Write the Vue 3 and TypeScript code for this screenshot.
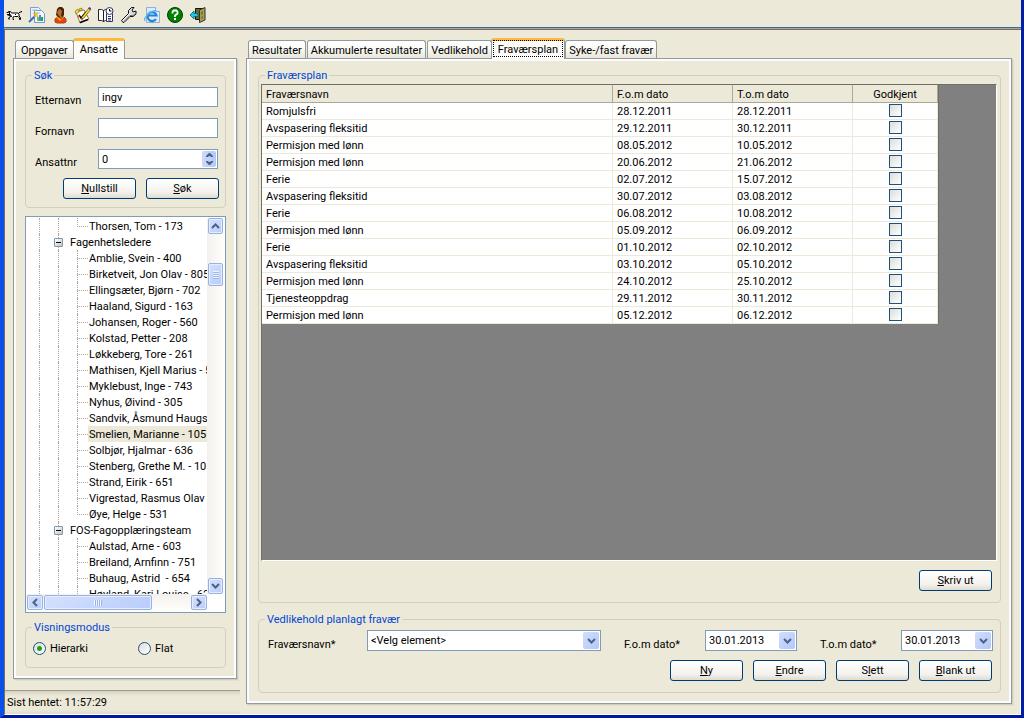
<script setup lang="ts">
import { ref } from 'vue'

interface Absence {
  name: string
  from: string
  to: string
  approved: boolean
}

interface TreeRow {
  label: string
  kind: 'group' | 'leaf'
  last?: boolean
}

interface Caption {
  before: string
  key: string
  after: string
}

const leftTabs = ['Oppgaver', 'Ansatte']
const activeLeft = ref('Ansatte')

const rightTabs = ['Resultater', 'Akkumulerte resultater', 'Vedlikehold', 'Fraværsplan', 'Syke-/fast fravær']
const activeRight = ref('Fraværsplan')

const tools = ['Søk', 'Rapport', 'Ansatt', 'Oppgaver', 'Tidsplan', 'Innstillinger', 'Nettleser', 'Hjelp', 'Avslutt']

const lastName = ref('ingv')
const firstName = ref('')
const employeeNo = ref('0')
const mode = ref('hierarki')
const fromDate = ref('30.01.2013')
const toDate = ref('30.01.2013')

const leaf = (label: string, last = false): TreeRow => ({ label, kind: 'leaf', last })
const group = (label: string): TreeRow => ({ label, kind: 'group' })

const tree: TreeRow[] = [
  leaf('Thorsen, Tom - 173', true),
  group('Fagenhetsledere'),
  leaf('Amblie, Svein - 400'),
  leaf('Birketveit, Jon Olav - 805'),
  leaf('Ellingsæter, Bjørn - 702'),
  leaf('Haaland, Sigurd - 163'),
  leaf('Johansen, Roger - 560'),
  leaf('Kolstad, Petter - 208'),
  leaf('Løkkeberg, Tore - 261'),
  leaf('Mathisen, Kjell Marius - 5'),
  leaf('Myklebust, Inge - 743'),
  leaf('Nyhus, Øivind - 305'),
  leaf('Sandvik, Åsmund Haugs'),
  leaf('Smelien, Marianne - 105'),
  leaf('Solbjør, Hjalmar - 636'),
  leaf('Stenberg, Grethe M. - 10'),
  leaf('Strand, Eirik - 651'),
  leaf('Vigrestad, Rasmus Olav -'),
  leaf('Øye, Helge - 531', true),
  group('FOS-Fagopplæringsteam'),
  leaf('Aulstad, Arne - 603'),
  leaf('Breiland, Arnfinn - 751'),
  leaf('Buhaug, Astrid  - 654'),
  leaf('Høyland, Kari Louise - 62'),
]
const selected = ref('Smelien, Marianne - 105')

const absence = (name: string, from: string, to: string): Absence => ({ name, from, to, approved: false })
const absences = ref<Absence[]>([
  absence('Romjulsfri', '28.12.2011', '28.12.2011'),
  absence('Avspasering fleksitid', '29.12.2011', '30.12.2011'),
  absence('Permisjon med lønn', '08.05.2012', '10.05.2012'),
  absence('Permisjon med lønn', '20.06.2012', '21.06.2012'),
  absence('Ferie', '02.07.2012', '15.07.2012'),
  absence('Avspasering fleksitid', '30.07.2012', '03.08.2012'),
  absence('Ferie', '06.08.2012', '10.08.2012'),
  absence('Permisjon med lønn', '05.09.2012', '06.09.2012'),
  absence('Ferie', '01.10.2012', '02.10.2012'),
  absence('Avspasering fleksitid', '03.10.2012', '05.10.2012'),
  absence('Permisjon med lønn', '24.10.2012', '25.10.2012'),
  absence('Tjenesteoppdrag', '29.11.2012', '30.11.2012'),
  absence('Permisjon med lønn', '05.12.2012', '06.12.2012'),
])

const actions: Caption[] = [
  { before: '', key: 'N', after: 'y' },
  { before: '', key: 'E', after: 'ndre' },
  { before: 'S', key: 'l', after: 'ett' },
  { before: '', key: 'B', after: 'lank ut' },
]
</script>

<template>
  <div class="window">
    <nav class="toolbar" aria-label="Verktøylinje">
      <button v-for="(tool, i) in tools" :key="tool" type="button" class="tool" :aria-label="tool">
        <svg v-if="i === 0" viewBox="0 0 16 16">
          <path d="M.5 5.500h2v-1h2l1 1.500h6.500l1 1v2l1.500 1.500v2h-1V11L12 9.500H8.500L7 10v2.500h1M5.500 9.500l-2 .5-1 2h1.500M5.500 9.500L4.500 7.500H1z" fill="#fff" stroke="#000" />
          <path d="M12.500 6.500L14 5h1.500V4" fill="none" stroke="#000" />
          <path d="M3 5h1v2H3zM9 7h1v1H9z" fill="#000" />
        </svg>
        <svg v-else-if="i === 1" viewBox="0 0 16 16">
          <path d="M1.500 .5h8l2 2v9h-10z" fill="#e9f1fb" stroke="#7fa0cc" />
          <path d="M5.500 3.500h7l3 3v9h-10z" fill="#f4f9ff" stroke="#6f96c8" />
          <path d="M3 3h5M7 6h4" stroke="#9dbfe8" />
          <path d="M8 10h2v4H8z" fill="#62c554" />
          <path d="M10 8h2v6h-2z" fill="#3c8ee0" />
          <path d="M12 10h2v4h-2z" fill="#2ba43b" />
          <path d="M0 15l6-6" stroke="#3871bd" stroke-width="2" />
          <path d="M6 5l1 2 2-1-1 2 1 2-2-1-2 1 1-2-2-2 2 1z" fill="#ffc928" stroke="#f0a818" stroke-width=".6" />
        </svg>
        <svg v-else-if="i === 2" viewBox="0 0 16 16">
          <path d="M3 15v-3l2-2h7l2 2v3l-2 1H5z" fill="#e8401c" stroke="#b04010" />
          <path d="M4 10l4 4 4-4z" fill="#ffb400" />
          <path d="M5 2l2-2h3l2 2v6l-2 3H7L4 8z" fill="#4a2209" />
          <path d="M6 3l2-1 2 2-1 5H7L5 6z" fill="#b46c28" />
          <path d="M7 9h3v3H8z" fill="#a55a20" />
        </svg>
        <svg v-else-if="i === 3" viewBox="0 0 16 16">
          <path d="M1 5l8-2 5 9-9 4z" fill="#fff" stroke="#8a7440" />
          <path d="M0 4l3-2 1 3-3 2zM4 2l3-1v2L5 4z" fill="#ffd42a" stroke="#8a6500" stroke-width=".6" />
          <path d="M4 8l2 3 5-6" fill="none" stroke="#000" stroke-width="1.500" />
          <path d="M7 10l7-9 2 1-7 9-3 1z" fill="#ffdf25" stroke="#5a4200" stroke-width=".7" />
          <path d="M13 1l2-1 1 2-1 1z" fill="#263cc9" />
          <path d="M3 10l2-1M6 13l2-1" stroke="#d32" />
          <path d="M5 15.500l8-3" stroke="#000" stroke-width="1.500" />
        </svg>
        <svg v-else-if="i === 4" viewBox="0 0 16 16">
          <path d="M.5 2.500h3l2 1v11l-2-1h-3z" fill="#fff" stroke="#222" />
          <path d="M5.500 3.500l2-1h2v11h-2l-2 1z" fill="#fff" stroke="#222" />
          <path d="M8.500 6.500h6v8h-6z" fill="#fff" stroke="#33346a" />
          <path d="M10 9.500h3M10 11.500h3M10 13h3" stroke="#34388a" />
          <circle cx="11.500" cy="4" r="3.500" fill="#fff" stroke="#33346a" />
          <path d="M11.500 2v2h2" fill="none" stroke="#000" />
        </svg>
        <svg v-else-if="i === 5" viewBox="0 0 16 16">
          <path d="M.5 13.500l7-7V3.500l3-3h2.500L11 3l1 2 3-1v3l-3 2.500H9l-6 6H2z" fill="#dcdcdc" stroke="#111" />
          <path d="M2 13l7-7" stroke="#fff" />
          <path d="M3 14.500l6-6h3l2-1.500" fill="none" stroke="#777" />
        </svg>
        <svg v-else-if="i === 6" viewBox="0 0 16 16">
          <path d="M2.500 .5h9l4 4v11h-13z" fill="#dceafb" stroke="#8db2df" />
          <path d="M11.500 .5v4h4" fill="#fff" stroke="#8db2df" />
          <path d="M12 12a4.500 4.500 0 1 1 .5-3.500H4" fill="none" stroke="#1e86d6" stroke-width="2.200" />
          <path d="M1 14C-1 10 9 2 13 4" fill="none" stroke="#58b3ef" stroke-width="1.200" />
        </svg>
        <svg v-else-if="i === 7" viewBox="0 0 16 16">
          <circle cx="8" cy="8" r="7.500" fill="#008000" stroke="#003c00" />
          <path d="M5.500 6.500V5l1-1.500h3l1 1.500v1.500L8 8.500V10" fill="none" stroke="#fff" stroke-width="1.800" />
          <path d="M7 11h2v2H7z" fill="#fff" />
        </svg>
        <svg v-else viewBox="0 0 16 16">
          <path d="M5.500 1.500h9v11h-9z" fill="#6c6a28" stroke="#111" />
          <path d="M9.500 3l5.500-2.500v12.500l-5.500 2.500z" fill="#a4a04e" stroke="#333" />
          <path d="M11 5l2-1v3l-2 1zM11 10l2-1v2l-2 1z" fill="#77752e" />
          <path d="M0 8l4-4v2.500h4v3H4V12z" fill="#22c9e0" stroke="#075d70" stroke-width=".8" />
        </svg>
      </button>
    </nav>

    <div class="body">
      <div class="left">
        <div class="tabs" role="tablist">
          <button
            v-for="tab in leftTabs"
            :key="tab"
            type="button"
            role="tab"
            class="tab"
            :class="{ active: tab === activeLeft }"
            :aria-selected="tab === activeLeft"
            @click="activeLeft = tab"
          >{{ tab }}</button>
        </div>
        <section class="pane left-pane">
          <fieldset class="box search">
            <legend>Søk</legend>
            <div class="field">
              <label for="last">Etternavn</label>
              <input id="last" v-model="lastName" type="text" class="text" />
            </div>
            <div class="field">
              <label for="first">Fornavn</label>
              <input id="first" v-model="firstName" type="text" class="text" />
            </div>
            <div class="field">
              <label for="number">Ansattnr</label>
              <span class="text combo">
                <input id="number" v-model="employeeNo" type="text" />
                <span class="spinner">
                  <button type="button" aria-label="Øk"><svg viewBox="0 0 7 4"><path d="M3 0h1l3 3v1H5L4 3H3L2 4H0V3z" /></svg></button>
                  <button type="button" aria-label="Reduser"><svg viewBox="0 0 7 4"><path d="M3 4h1l3-3V0H5L4 1H3L2 0H0v1z" /></svg></button>
                </span>
              </span>
            </div>
            <div class="buttons">
              <button type="button" class="push"><u>N</u>ullstill</button>
              <button type="button" class="push"><u>S</u>øk</button>
            </div>
          </fieldset>

          <div class="tree-box">
            <ul class="tree" role="tree">
              <li v-for="row in tree" :key="row.label" role="treeitem" class="row" :class="[row.kind, { last: row.last }]">
                <i class="guide"></i>
                <i class="guide"><b v-if="row.kind === 'group'" class="expander"></b></i>
                <i v-if="row.kind === 'leaf'" class="guide branch"></i>
                <span class="node" :class="{ selected: row.label === selected }" @click="selected = row.label">{{ row.label }}</span>
              </li>
            </ul>
            <div class="bar vertical">
              <button type="button" class="cap" aria-label="Opp"><svg viewBox="0 0 9 6"><path d="M1 5l3.500-3.500L8 5" /></svg></button>
              <span class="track short"></span>
              <span class="thumb"><i class="grip"></i></span>
              <span class="track"></span>
              <button type="button" class="cap" aria-label="Ned"><svg viewBox="0 0 9 6"><path d="M1 1l3.500 3.500L8 1" /></svg></button>
            </div>
            <div class="bar horizontal">
              <button type="button" class="cap" aria-label="Venstre"><svg viewBox="0 0 6 9"><path d="M5 1L1.500 4.500 5 8" /></svg></button>
              <span class="thumb"><i class="grip"></i></span>
              <span class="track"></span>
              <button type="button" class="cap" aria-label="Høyre"><svg viewBox="0 0 6 9"><path d="M1 1l3.500 3.500L1 8" /></svg></button>
            </div>
          </div>

          <fieldset class="box modes">
            <legend>Visningsmodus</legend>
            <label class="choice"><input v-model="mode" type="radio" name="mode" value="hierarki" />Hierarki</label>
            <label class="choice"><input v-model="mode" type="radio" name="mode" value="flat" />Flat</label>
          </fieldset>
        </section>
        <footer class="status">Sist hentet: 11:57:29</footer>
      </div>

      <main class="right">
        <div class="tabs" role="tablist">
          <button
            v-for="tab in rightTabs"
            :key="tab"
            type="button"
            role="tab"
            class="tab"
            :class="{ active: tab === activeRight, focused: tab === activeRight }"
            :aria-selected="tab === activeRight"
            @click="activeRight = tab"
          >{{ tab }}</button>
        </div>
        <section class="pane right-pane">
          <fieldset class="box plan">
            <legend>Fraværsplan</legend>
            <div class="grid">
              <table>
                <colgroup><col /><col class="date-col" /><col class="date-col" /><col class="check-col" /></colgroup>
                <thead>
                  <tr><th>Fraværsnavn</th><th>F.o.m dato</th><th>T.o.m dato</th><th class="center">Godkjent</th></tr>
                </thead>
                <tbody>
                  <tr v-for="item in absences" :key="item.from">
                    <td>{{ item.name }}</td>
                    <td>{{ item.from }}</td>
                    <td>{{ item.to }}</td>
                    <td class="check"><input v-model="item.approved" type="checkbox" :aria-label="'Godkjent ' + item.from" /></td>
                  </tr>
                </tbody>
              </table>
            </div>
            <div class="print"><button type="button" class="push"><u>S</u>kriv ut</button></div>
          </fieldset>

          <fieldset class="box edit">
            <legend>Vedlikehold planlagt fravær</legend>
            <div class="edit-row">
              <label class="name-label" for="kind">Fraværsnavn*</label>
              <span class="text combo kind">
                <select id="kind"><option>&lt;Velg element&gt;</option></select>
                <span class="drop"><svg viewBox="0 0 9 6"><path d="M1 1l3.500 3.500L8 1" /></svg></span>
              </span>
              <label class="date-label" for="from">F.o.m dato*</label>
              <span class="text combo date">
                <input id="from" v-model="fromDate" type="text" />
                <button type="button" class="drop" aria-label="Velg fra-dato"><svg viewBox="0 0 9 6"><path d="M1 1l3.500 3.500L8 1" /></svg></button>
              </span>
              <label class="date-label" for="to">T.o.m dato*</label>
              <span class="text combo date">
                <input id="to" v-model="toDate" type="text" />
                <button type="button" class="drop" aria-label="Velg til-dato"><svg viewBox="0 0 9 6"><path d="M1 1l3.500 3.500L8 1" /></svg></button>
              </span>
            </div>
            <div class="buttons">
              <button v-for="a in actions" :key="a.key" type="button" class="push">{{ a.before }}<u>{{ a.key }}</u>{{ a.after }}</button>
            </div>
          </fieldset>
        </section>
      </main>
    </div>
  </div>
</template>

<style>
body {
  background: #ece9d8;
}
</style>

<style scoped>
.window,
.window * {
  box-sizing: border-box;
}
.window {
  height: 100vh;
  display: flex;
  flex-direction: column;
  border: solid #0a3ad6;
  border-width: 0 3px 3px 4px;
  border-right-color: #001ea8;
  border-bottom-color: #0018a0;
  border-left-color: #0a50e8;
  background: #ece9d8;
  color: #000;
  font: 11px/13px Roboto, "Liberation Sans", Arial, sans-serif;
}
button,
input,
select {
  font: inherit;
  color: inherit;
  margin: 0;
}
.toolbar {
  flex: none;
  display: flex;
  gap: 7px;
  height: 30px;
  padding: 7px 0 0 2px;
  border-bottom: 1px solid #716f64;
  box-shadow: inset 0 -1px #aca899, inset 0 -2px #3c6a9c;
}
.tool {
  width: 16px;
  height: 16px;
  padding: 0;
  border: 0;
  background: none;
}
.tool svg {
  display: block;
  width: 16px;
  height: 16px;
  overflow: visible;
}
.body {
  flex: 1;
  min-height: 0;
  display: flex;
  gap: 6px;
  border: solid #fff;
  border-width: 0 1px 1px 0;
  border-left: 1px solid #716f64;
}
.left {
  flex: none;
  width: 235px;
  display: flex;
  flex-direction: column;
  padding-top: 8px;
}
.right {
  flex: 1;
  min-width: 0;
  display: flex;
  flex-direction: column;
  padding: 8px 8px 10px 0;
}
.tabs {
  flex: none;
  display: flex;
  align-items: flex-end;
  height: 20px;
  padding-left: 2px;
}
.left .tabs {
  padding-left: 10px;
}
.tab {
  height: 18px;
  margin-right: 1px;
  padding: 1px 3px 0;
  border: 1px solid #919b9c;
  border-bottom: 0;
  border-radius: 3px 3px 0 0;
  background: linear-gradient(#fff, #fafaf6 40%, #e9e6da);
  white-space: nowrap;
}
.left .tab {
  padding: 1px 5px 0;
}
.tab.active,
.left .tab.active {
  position: relative;
  height: 21px;
  margin: 0 0 -1px -2px;
  padding: 0 6px 2px;
  border-top: 3px solid #ffb83c;
  border-bottom: 0;
  background: #fcfbf7;
}
.tab.focused {
  outline: 1px dotted #000;
  outline-offset: -3px;
}
.pane {
  flex: 1;
  min-height: 0;
  display: flex;
  flex-direction: column;
  border: 1px solid #919b9c;
  box-shadow: inset 0 0 0 2px #fcfcfe, 1px 1px #d0cebf, 2px 2px #e3e0d0;
}
.left-pane {
  margin: 0 3px 11px 8px;
  padding: 10px 10px 10px 11px;
}
.right-pane {
  padding: 10px 10px 10px 11px;
}
.box {
  min-width: 0;
  margin: 0;
  padding: 0;
  border: 1px solid #d0d0bf;
  border-radius: 4px;
}
.box legend {
  margin-left: 6px;
  padding: 0 2px;
  color: #0046d5;
}
.search {
  padding: 5px 7px 8px 9px;
}
.search legend {
  margin-left: -3px;
}
.field {
  display: flex;
  height: 31px;
}
.field label {
  width: 63px;
  padding-top: 7px;
}
.text {
  flex: 1;
  min-width: 0;
  height: 20px;
  padding: 0 3px;
  border: 1px solid #7f9db9;
  border-radius: 0;
  background: #fff;
}
.combo {
  display: flex;
  align-items: center;
  padding: 0 1px 0 0;
}
.combo input,
.combo select {
  flex: 1;
  min-width: 0;
  align-self: stretch;
  padding: 0 0 0 3px;
  border: 0;
  border-radius: 0;
  background: none;
  appearance: none;
}
.spinner {
  display: flex;
  flex-direction: column;
  width: 14px;
  height: 16px;
  border-radius: 2px;
  background: linear-gradient(90deg, #ccdafc, #b3c7f9);
}
.spinner button {
  flex: 1;
  display: flex;
  align-items: center;
  justify-content: center;
  padding: 0;
  border: 0;
  background: none;
}
.spinner svg {
  width: 7px;
  height: 4px;
  fill: #4d6185;
}
.buttons {
  display: flex;
  justify-content: flex-end;
  gap: 10px;
}
.search .buttons {
  margin-right: -1px;
  margin-top: -2px;
}
.push {
  width: 73px;
  height: 21px;
  padding: 0 0 1px;
  border: 1px solid #003c74;
  border-radius: 3px;
  background: linear-gradient(#fff, #f3f2ed 70%, #dfdbd0);
}
.tree-box {
  flex: 1;
  min-height: 0;
  display: grid;
  grid-template: minmax(0, 1fr) 17px / minmax(0, 1fr) 17px;
  margin-top: 8px;
  padding: 1px 1px 1px 0;
  border: 1px solid #7f9db9;
  background: #fff;
}
.tree {
  margin: 0;
  padding: 0;
  overflow: hidden;
  list-style: none;
}
.row {
  display: flex;
  height: 16px;
  padding-left: 13px;
  line-height: 18px;
  white-space: pre;
}
.guide {
  flex: none;
  width: 19px;
  border-left: 1px dotted #aca899;
}
.guide.branch {
  width: 11px;
  background: linear-gradient(90deg, #aca899 50%, transparent 50%) 1px 8px / 2px 1px repeat-x;
}
.last .branch {
  height: 9px;
}
.expander {
  position: relative;
  display: block;
  width: 9px;
  height: 9px;
  margin: 4px 0 0 -5px;
  border: 1px solid #7898b5;
  border-radius: 1px;
  background: linear-gradient(#000, #000) center / 5px 1px no-repeat, linear-gradient(135deg, #fff, #cbc5b5);
}
.node {
  padding: 0 1px;
}
.group .node {
  margin-left: -7px;
  padding-left: 0;
}
.node.selected {
  background: #ece9d8;
}
.bar {
  display: flex;
  background: linear-gradient(90deg, #f3f1ec, #fefefb);
}
.vertical {
  flex-direction: column;
  padding: 0 1px;
}
.horizontal {
  background: linear-gradient(#f3f1ec, #fefefb);
  padding: 1px 0 0 1px;
}
.cap,
.thumb {
  flex: none;
  display: flex;
  align-items: center;
  justify-content: center;
  padding: 0;
  border: 1px solid #98b1e4;
  border-radius: 2px;
  background: linear-gradient(135deg, #d3e0fe, #b9cdfb);
  box-shadow: inset 0 0 0 1px #e6eefc;
}
.cap {
  width: 15px;
  height: 16px;
}
.horizontal .cap {
  width: 16px;
  height: 15px;
}
.track {
  flex: 1;
}
.track.short {
  flex: 0 1 29px;
}
.vertical .thumb {
  width: 15px;
  height: 23px;
}
.horizontal .thumb {
  width: 60%;
  height: 15px;
  margin-left: 1px;
}
.grip {
  width: 6px;
  height: 8px;
  background: repeating-linear-gradient(#f0f5ff 0 1px, #9cb4ee 1px 2px);
}
.horizontal .grip {
  width: 8px;
  height: 6px;
  background: repeating-linear-gradient(90deg, #f0f5ff 0 1px, #9cb4ee 1px 2px);
}
.cap svg,
.drop svg {
  width: 9px;
  height: 6px;
  fill: none;
  stroke: #4d6185;
  stroke-width: 2;
}
.horizontal .cap svg {
  width: 6px;
  height: 9px;
}
.modes {
  display: flex;
  margin-top: 8px;
  padding: 8px 7px 12px;
}
.modes legend {
  margin-left: -1px;
}
.choice {
  display: flex;
  align-items: center;
  gap: 4px;
  width: 105px;
}
.choice + .choice {
  width: auto;
}
.choice input {
  appearance: none;
  width: 13px;
  height: 13px;
  border: 1px solid #1c5180;
  border-radius: 50%;
  background: linear-gradient(135deg, #dcdcd7, #fff);
}
.choice input:checked {
  background: radial-gradient(circle, #21a121 0 2px, transparent 3px), linear-gradient(135deg, #dcdcd7, #fff);
}
.status {
  flex: none;
  height: 24px;
  padding: 5px 3px 0 2px;
  border-top: 1px solid #9d9a8c;
  background: linear-gradient(#d5d2c3, #ece9d8 5px, #ece9d8 18px, #e0ddcd);
}
.plan {
  flex: 1;
  min-height: 0;
  display: flex;
  flex-direction: column;
  padding: 2px 3px 11px 2px;
}
.grid {
  flex: 1;
  min-height: 0;
  overflow: hidden;
  border: 1px solid #716f64;
  border-right-color: #fff;
  border-bottom-color: #fff;
  background: #808080;
}
table {
  width: calc(100% - 57px);
  table-layout: fixed;
  border-collapse: separate;
  border-spacing: 0;
  background: #fff;
  border-right: 1px solid #716f64;
}
.date-col {
  width: 120px;
}
.check-col {
  width: 85px;
}
th,
td {
  height: 17px;
  padding: 2px 4px 0;
  border: solid #ece9d8;
  border-width: 0 1px 1px 0;
  line-height: 14px;
  text-align: left;
  font-weight: normal;
  white-space: nowrap;
}
th {
  height: 18px;
  border-color: #aca899;
  background: #ece9d8;
}
.center {
  text-align: center;
}
.check {
  padding: 1px 0 0;
  vertical-align: top;
}
td input {
  appearance: none;
  display: block;
  width: 13px;
  height: 13px;
  margin: 0 auto;
  border: 1px solid #1c5180;
  background: linear-gradient(135deg, #dcdcd7, #fff);
}
td input:checked {
  background: #21a121;
}
.print {
  display: flex;
  justify-content: flex-end;
  padding: 9px 5px 0 0;
}
.plan legend {
  margin-left: 4px;
}
.edit {
  margin-top: 10px;
  padding: 4px 8px 11px 9px;
}
.edit legend {
  margin-left: -3px;
}
.edit-row {
  display: flex;
  margin: 0 -1px 9px 0;
}
.edit-row label {
  padding-top: 8px;
}
.name-label {
  width: 99px;
}
.date-label {
  width: 81px;
  margin-left: 23px;
}
.edit-row .text {
  height: 21px;
}
.edit-row .date {
  flex: 0 0 92px;
}
.drop {
  flex: none;
  display: flex;
  align-items: center;
  justify-content: center;
  width: 16px;
  height: 17px;
  padding: 0;
  border: 0;
  border-radius: 2px;
  background: linear-gradient(135deg, #d0ddfd, #b3c7f9);
  pointer-events: none;
}
</style>
